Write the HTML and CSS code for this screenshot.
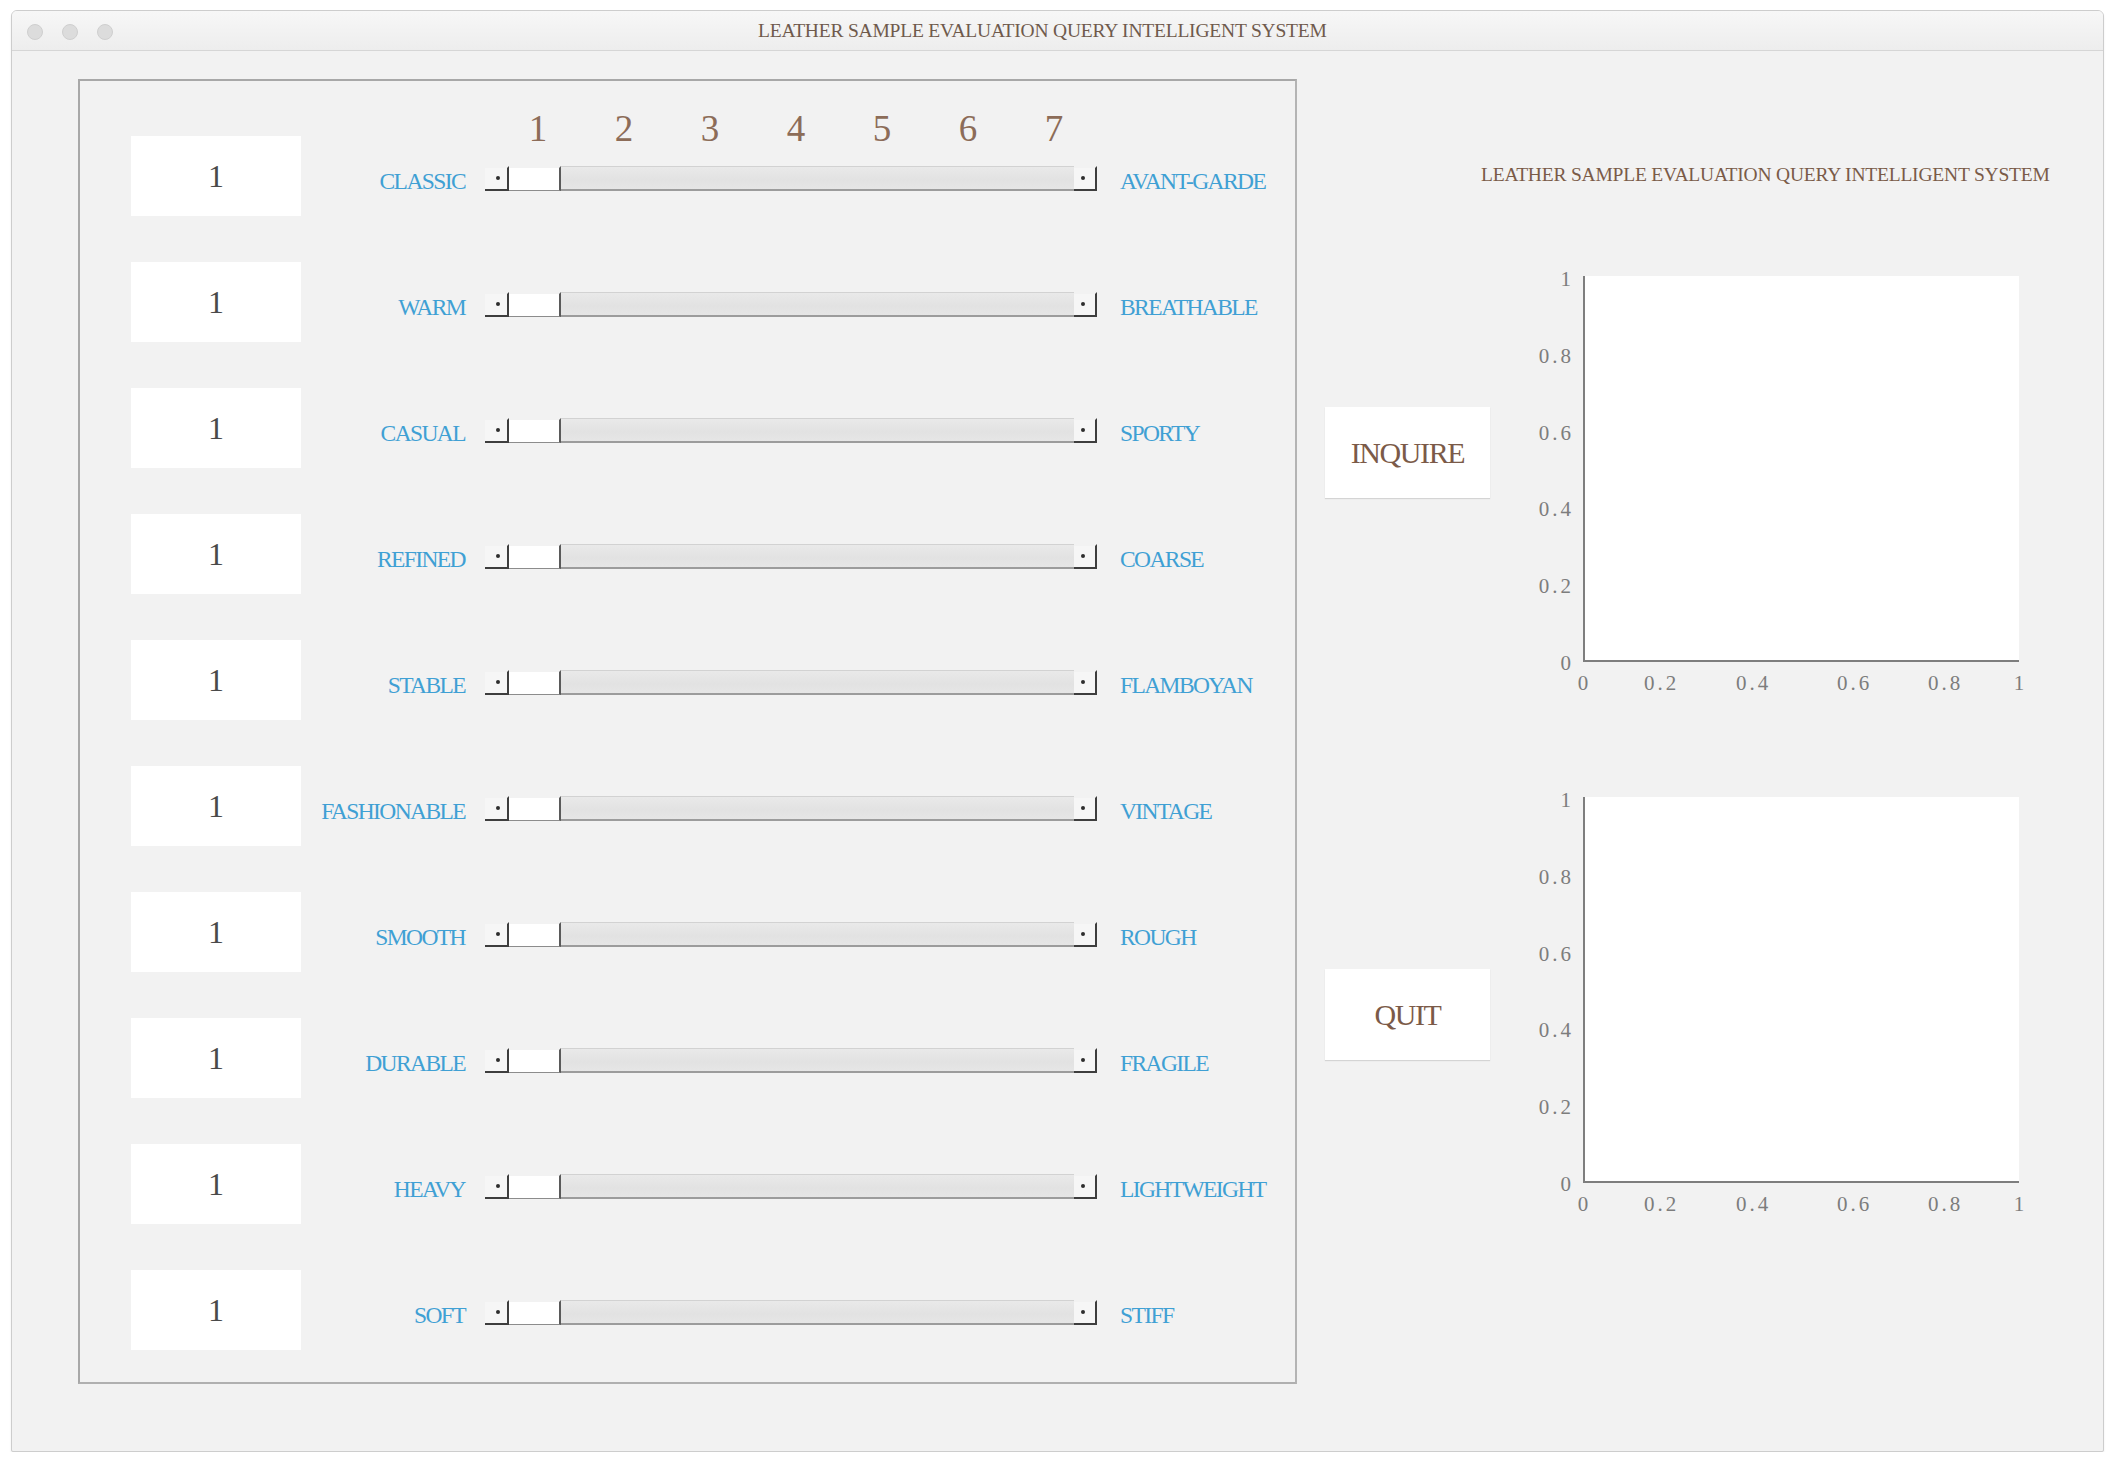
FILE: index.html
```html
<!DOCTYPE html>
<html>
<head>
<meta charset="utf-8">
<title>Leather Sample Evaluation Query Intelligent System</title>
<link rel="stylesheet" href="styles.css">
</head>
<body>
<div class="window">
  <div class="titlebar">
    <div class="lights"><span class="light"></span><span class="light"></span><span class="light"></span></div>
    <div class="title">LEATHER SAMPLE EVALUATION QUERY INTELLIGENT SYSTEM</div>
  </div>
  <div class="content">
    <div class="panel">
      <div class="scale"><span>1</span><span>2</span><span>3</span><span>4</span><span>5</span><span>6</span><span>7</span></div>
      <div class="rows">
        <div class="row">
          <div class="value">1</div>
          <div class="lbl lbl-left">CLASSIC</div>
          <div class="slider"><div class="arrow arrow-l"></div><div class="thumb"></div><div class="track"></div><div class="arrow arrow-r"></div></div>
          <div class="lbl lbl-right">AVANT-GARDE</div>
        </div>
        <div class="row">
          <div class="value">1</div>
          <div class="lbl lbl-left">WARM</div>
          <div class="slider"><div class="arrow arrow-l"></div><div class="thumb"></div><div class="track"></div><div class="arrow arrow-r"></div></div>
          <div class="lbl lbl-right">BREATHABLE</div>
        </div>
        <div class="row">
          <div class="value">1</div>
          <div class="lbl lbl-left">CASUAL</div>
          <div class="slider"><div class="arrow arrow-l"></div><div class="thumb"></div><div class="track"></div><div class="arrow arrow-r"></div></div>
          <div class="lbl lbl-right">SPORTY</div>
        </div>
        <div class="row">
          <div class="value">1</div>
          <div class="lbl lbl-left">REFINED</div>
          <div class="slider"><div class="arrow arrow-l"></div><div class="thumb"></div><div class="track"></div><div class="arrow arrow-r"></div></div>
          <div class="lbl lbl-right">COARSE</div>
        </div>
        <div class="row">
          <div class="value">1</div>
          <div class="lbl lbl-left">STABLE</div>
          <div class="slider"><div class="arrow arrow-l"></div><div class="thumb"></div><div class="track"></div><div class="arrow arrow-r"></div></div>
          <div class="lbl lbl-right">FLAMBOYAN</div>
        </div>
        <div class="row">
          <div class="value">1</div>
          <div class="lbl lbl-left">FASHIONABLE</div>
          <div class="slider"><div class="arrow arrow-l"></div><div class="thumb"></div><div class="track"></div><div class="arrow arrow-r"></div></div>
          <div class="lbl lbl-right">VINTAGE</div>
        </div>
        <div class="row">
          <div class="value">1</div>
          <div class="lbl lbl-left">SMOOTH</div>
          <div class="slider"><div class="arrow arrow-l"></div><div class="thumb"></div><div class="track"></div><div class="arrow arrow-r"></div></div>
          <div class="lbl lbl-right">ROUGH</div>
        </div>
        <div class="row">
          <div class="value">1</div>
          <div class="lbl lbl-left">DURABLE</div>
          <div class="slider"><div class="arrow arrow-l"></div><div class="thumb"></div><div class="track"></div><div class="arrow arrow-r"></div></div>
          <div class="lbl lbl-right">FRAGILE</div>
        </div>
        <div class="row">
          <div class="value">1</div>
          <div class="lbl lbl-left">HEAVY</div>
          <div class="slider"><div class="arrow arrow-l"></div><div class="thumb"></div><div class="track"></div><div class="arrow arrow-r"></div></div>
          <div class="lbl lbl-right">LIGHTWEIGHT</div>
        </div>
        <div class="row">
          <div class="value">1</div>
          <div class="lbl lbl-left">SOFT</div>
          <div class="slider"><div class="arrow arrow-l"></div><div class="thumb"></div><div class="track"></div><div class="arrow arrow-r"></div></div>
          <div class="lbl lbl-right">STIFF</div>
        </div>
      </div>
    </div>
    <div class="side">
      <div class="subtitle">LEATHER SAMPLE EVALUATION QUERY INTELLIGENT SYSTEM</div>
      <div class="chart-row chart-row-1">
        <div class="btn btn-1">INQUIRE</div>
        <div class="plot">
          <span class="yt" style="top:0%">1</span>
          <span class="yt" style="top:20%">0.8</span>
          <span class="yt" style="top:40%">0.6</span>
          <span class="yt" style="top:60%">0.4</span>
          <span class="yt" style="top:80%">0.2</span>
          <span class="yt" style="top:100%">0</span>
          <span class="xt" style="left:-2px">0</span>
          <span class="xt" style="left:75px">0.2</span>
          <span class="xt" style="left:167px">0.4</span>
          <span class="xt" style="left:268px">0.6</span>
          <span class="xt" style="left:359px">0.8</span>
          <span class="xt" style="left:434px">1</span>
        </div>
      </div>
      <div class="chart-row chart-row-2">
        <div class="btn btn-2">QUIT</div>
        <div class="plot">
          <span class="yt" style="top:0%">1</span>
          <span class="yt" style="top:20%">0.8</span>
          <span class="yt" style="top:40%">0.6</span>
          <span class="yt" style="top:60%">0.4</span>
          <span class="yt" style="top:80%">0.2</span>
          <span class="yt" style="top:100%">0</span>
          <span class="xt" style="left:-2px">0</span>
          <span class="xt" style="left:75px">0.2</span>
          <span class="xt" style="left:167px">0.4</span>
          <span class="xt" style="left:268px">0.6</span>
          <span class="xt" style="left:359px">0.8</span>
          <span class="xt" style="left:434px">1</span>
        </div>
      </div>
    </div>
  </div>
</div>
</body>
</html>
```

FILE: styles.css
```css
html, body {
  margin: 0;
  padding: 0;
  background: #ffffff;
}

body {
  font-family: "Liberation Serif", "DejaVu Serif", serif;
}

.window {
  box-sizing: border-box;
  margin: 10px 0 0 11px;
  width: 2093px;
  height: 1442px;
  border: 1px solid #cdcdcd;
  border-radius: 6px 6px 2px 2px;
  background: #f2f2f2;
  overflow: hidden;
  box-shadow: 0 2px 2px rgba(0, 0, 0, 0.08);
}

.titlebar {
  box-sizing: border-box;
  height: 40px;
  display: flex;
  align-items: center;
  background: linear-gradient(#f7f7f7, #ededed);
  border-bottom: 1px solid #d6d6d6;
}

.lights {
  display: flex;
  gap: 19px;
  padding-left: 15px;
  padding-top: 3px;
}

.light {
  width: 16px;
  height: 16px;
  border-radius: 50%;
  background: #dcdcdc;
  border: 1px solid #cfcfcf;
  box-sizing: border-box;
  display: block;
}

.title {
  margin-left: 645px;
  font-family: "Liberation Serif", serif;
  font-size: 19.5px;
  letter-spacing: -0.2px;
  line-height: 24px;
  color: #6f5a4c;
  white-space: nowrap;
}

.content {
  display: flex;
  align-items: flex-start;
}

.panel {
  box-sizing: border-box;
  margin: 28px 0 0 66px;
  width: 1219px;
  height: 1305px;
  border: 2px solid #a8a8a8;
  border-right-color: #b4b4b4;
  border-bottom-color: #b0b0b0;
  padding: 28px 0 0 51px;
}

.scale {
  display: flex;
  margin-left: 364px;
  height: 40px;
  margin-bottom: -13px;
}

.scale span {
  width: 86px;
  text-align: center;
  font-family: "Liberation Serif", serif;
  font-size: 37px;
  line-height: 40px;
  color: #8c6c58;
}

.rows {
  display: flex;
  flex-direction: column;
  gap: 46px;
}

.row {
  display: flex;
  align-items: center;
  height: 80px;
}

.value {
  width: 170px;
  height: 80px;
  background: #ffffff;
  display: flex;
  align-items: center;
  justify-content: center;
  font-family: "Liberation Serif", serif;
  font-size: 32px;
  color: #4a4a4a;
}

.lbl {
  font-family: "Liberation Serif", serif;
  font-size: 23.5px;
  letter-spacing: -1.6px;
  line-height: 26px;
  color: #3fa0d4;
  white-space: nowrap;
  margin-top: 9px;
}

.lbl-left {
  width: 164px;
  text-align: right;
  margin-right: 20px;
}

.lbl-right {
  margin-left: 23px;
}

.slider {
  display: flex;
  width: 612px;
  height: 25px;
  margin-top: 5px;
}

.arrow {
  position: relative;
  box-sizing: border-box;
  width: 24px;
  background: #f6f6f6;
  border-right: 2px solid #3e3e3e;
  border-bottom: 2px solid #3e3e3e;
  border-top: 2px solid #f2f2f2;
}

.arrow-r {
  width: 23px;
}

.arrow::after {
  content: "";
  position: absolute;
  width: 4px;
  height: 4px;
  border-radius: 50%;
  background: #2e2e2e;
  top: 8px;
}

.arrow-l::after {
  left: 11px;
}

.arrow-r::after {
  left: 7px;
}

.thumb {
  box-sizing: border-box;
  width: 52px;
  background: #ffffff;
  border-right: 2px solid #5a5a5a;
  border-bottom: 1px solid #8c8c8c;
  border-top: 2px solid #f2f2f2;
}

.track {
  flex: 1;
  box-sizing: border-box;
  background: linear-gradient(#e9e9e9, #e2e2e2 60%, #e6e6e6);
  border-top: 1px solid #d2d2d2;
  border-bottom: 2px solid #9c9c9c;
}

.side {
  padding-left: 28px;
  display: flex;
  flex-direction: column;
}

.subtitle {
  margin-top: 112px;
  margin-left: 156px;
  font-family: "Liberation Serif", serif;
  font-size: 19.5px;
  letter-spacing: -0.2px;
  line-height: 24px;
  color: #7a5b48;
  white-space: nowrap;
}

.chart-row {
  display: flex;
  align-items: flex-start;
}

.chart-row-1 {
  margin-top: 89px;
}

.chart-row-2 {
  margin-top: 135px;
}

.btn {
  width: 165px;
  height: 91px;
  background: #ffffff;
  box-shadow: 0 1px 1px #d4d4d4;
  display: flex;
  align-items: center;
  justify-content: center;
  font-family: "Liberation Serif", serif;
  font-size: 30px;
  letter-spacing: -1.4px;
  color: #7b5a48;
}

.btn-1 {
  margin-top: 131px;
}

.btn-2 {
  margin-top: 172px;
}

.plot {
  position: relative;
  box-sizing: border-box;
  margin-left: 93px;
  width: 436px;
  height: 386px;
  background: #ffffff;
  border-left: 2px solid #7e7e7e;
  border-bottom: 2px solid #7e7e7e;
}

.yt {
  position: absolute;
  right: calc(100% + 11px);
  margin-top: 3px;
  transform: translateY(-50%);
  font-family: "Liberation Serif", serif;
  font-size: 21px;
  letter-spacing: 3px;
  line-height: 24px;
  color: #7d7d7d;
  white-space: nowrap;
}

.xt {
  position: absolute;
  top: calc(100% + 10px);
  transform: translateX(-50%);
  font-family: "Liberation Serif", serif;
  font-size: 21px;
  letter-spacing: 3px;
  text-indent: 3px;
  line-height: 26px;
  color: #7d7d7d;
  white-space: nowrap;
}
```
